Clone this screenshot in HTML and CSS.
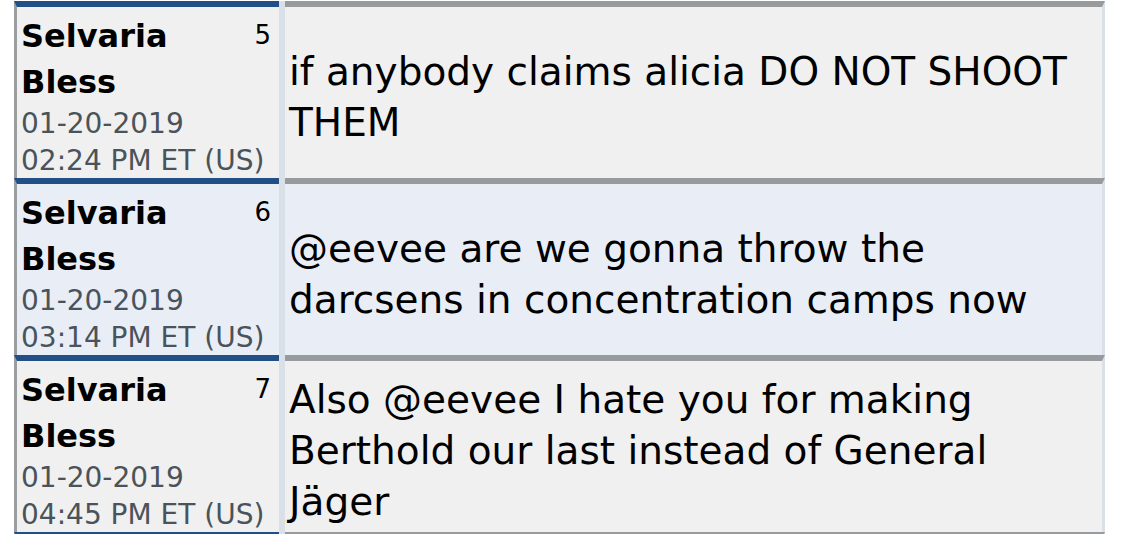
FILE: index.html
```html
<!DOCTYPE html>
<html>
<head>
<meta charset="utf-8">
<link rel="stylesheet" href="styles.css">
</head>
<body>
<div class="thread">
  <div class="post">
    <div class="meta">
      <div class="meta-head"><div class="author">Selvaria Bless</div><span class="num">5</span></div>
      <div class="date">01-20-2019<br>02:24 PM ET (US)</div>
    </div>
    <div class="body"><p>if anybody claims alicia DO NOT SHOOT THEM</p></div>
  </div>
  <div class="post alt">
    <div class="meta">
      <div class="meta-head"><div class="author">Selvaria Bless</div><span class="num">6</span></div>
      <div class="date">01-20-2019<br>03:14 PM ET (US)</div>
    </div>
    <div class="body"><p>@eevee are we gonna throw the darcsens in concentration camps now</p></div>
  </div>
  <div class="post">
    <div class="meta">
      <div class="meta-head"><div class="author">Selvaria Bless</div><span class="num">7</span></div>
      <div class="date">01-20-2019<br>04:45 PM ET (US)</div>
    </div>
    <div class="body"><p>Also @eevee I hate you for making Berthold our last instead of General Jäger</p></div>
  </div>
  <div class="post alt next">
    <div class="meta"></div>
    <div class="body"></div>
  </div>
</div>
</body>
</html>
```

FILE: styles.css
```css
html, body {
  margin: 0;
  padding: 0;
  background: #ffffff;
}
body {
  font-family: "DejaVu Sans", Verdana, sans-serif;
  color: #000;
  padding-top: 1px;
}
.thread {
  margin-left: 14px;
  width: 1091px;
}
.post {
  display: flex;
  gap: 6px;
  background: #d9e0e8;
  height: 177px;
}
.meta {
  box-sizing: border-box;
  width: 265px;
  flex: none;
  border-left: 3px solid #9b9ea1;
  border-top: 6px solid #234f87;
  background: #f0f0f0;
  padding: 6px 8px 0 4px;
}
.body {
  flex: 1;
  box-sizing: border-box;
  border-top: 6px solid #989b9e;
  border-right: 3px solid #d9e0e8;
  background: #f0f0f0;
  display: flex;
  align-items: center;
  padding: 8px 10px 0 4px;
}
.post.alt .meta,
.post.alt .body {
  background: #e9eef6;
}
.meta-head {
  display: flex;
  align-items: flex-start;
}
.author {
  flex: 1;
  font-weight: bold;
  font-size: 32px;
  line-height: 46px;
}
.num {
  font-size: 26px;
  line-height: 26px;
  margin-top: 9px;
}
.date {
  font-size: 28px;
  line-height: 37px;
  color: #4a535b;
}
.body p {
  margin: 0;
  font-size: 39px;
  line-height: 51px;
}
```
